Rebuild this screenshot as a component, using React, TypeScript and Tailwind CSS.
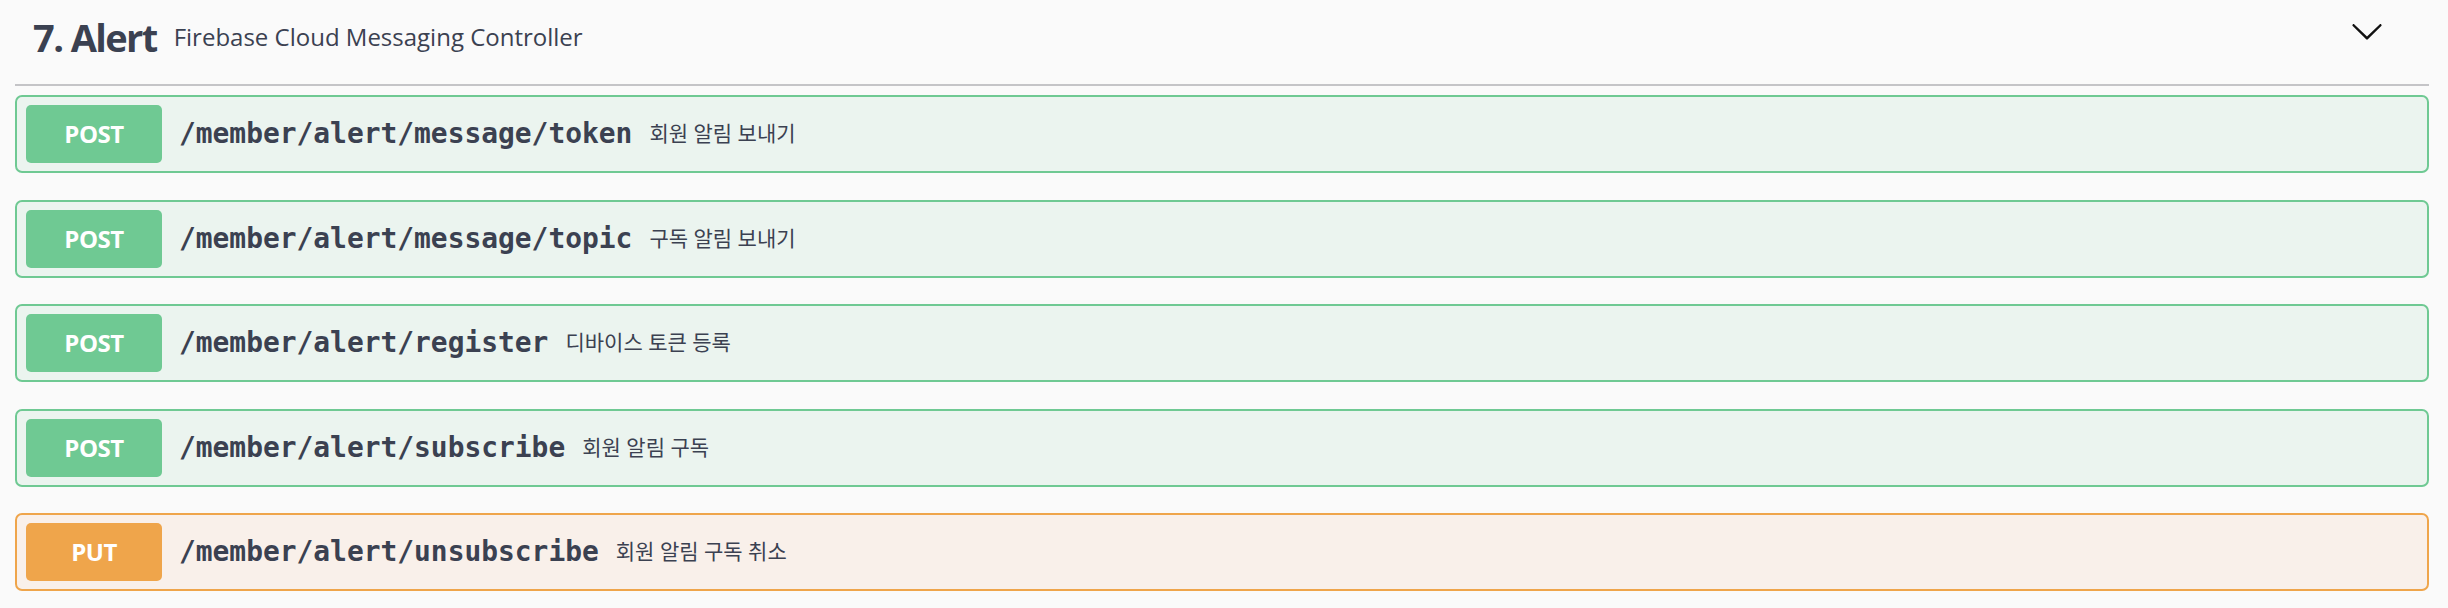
import React from "react"

type Op = {
  method: "POST" | "PUT"
  path: string
  summary: string
}

const ops: Op[] = [
  { method: "POST", path: "/member/alert/message/token", summary: "회원 알림 보내기" },
  { method: "POST", path: "/member/alert/message/topic", summary: "구독 알림 보내기" },
  { method: "POST", path: "/member/alert/register", summary: "디바이스 토큰 등록" },
  { method: "POST", path: "/member/alert/subscribe", summary: "회원 알림 구독" },
  { method: "PUT", path: "/member/alert/unsubscribe", summary: "회원 알림 구독 취소" },
]

const styles = {
  POST: {
    box: "border-[#6fc993] bg-[#ebf4ef]",
    badge: "bg-[#6fc993]",
  },
  PUT: {
    box: "border-[#efa54b] bg-[#f9f0ea]",
    badge: "bg-[#efa54b]",
  },
}

function OpBlock({ op }: { op: Op }) {
  const s = styles[op.method]
  return (
    <div className={`flex items-center h-[78px] px-[9px] border-2 rounded-[7px] ${s.box}`}>
      <span
        className={`flex items-center justify-center w-[136px] h-[58px] rounded-[5px] text-white font-bold text-[24px] tracking-[-0.5px] ${s.badge}`}
        style={{ fontFamily: '"Open Sans", sans-serif' }}
      >
        {op.method}
      </span>
      <span
        className="pl-[17px] pr-[17px] text-[27.9px] font-bold text-[#3b4151]"
        style={{ fontFamily: '"DejaVu Sans Mono", monospace' }}
      >
        {op.path}
      </span>
      <span
        className="text-[21px] text-[#3b4151]"
        style={{ fontFamily: '"Noto Sans", "Noto Sans CJK KR", sans-serif' }}
      >
        {op.summary}
      </span>
    </div>
  )
}

export default function App() {
  return (
    <div className="w-[2448px] h-[608px] bg-[#fafafa] overflow-hidden">
      <div className="ml-[15px] mr-[19px]">
        {/* Tag header */}
        <div className="flex items-center h-[86px] pb-[10px] border-b-2 border-[#c4c4c7]">
          <h3
            className="flex items-center flex-1 pl-[18px] text-[#3b4151]"
            style={{ fontFamily: '"Open Sans", sans-serif' }}
          >
            <span className="text-[38px] font-bold tracking-[-1.6px]">7. Alert</span>
            <span className="ml-[17px] text-[24px]">Firebase Cloud Messaging Controller</span>
          </h3>
          <svg
            className="self-start mt-[14px] mr-[45px]"
            width="34"
            height="34"
            viewBox="0 0 20 20"
            aria-hidden="true"
          >
            <path
              fill="#111"
              d="M17.418 6.109c.272-.268.709-.268.979 0s.271.701 0 .969l-7.908 7.83c-.27.268-.707.268-.979 0l-7.908-7.83c-.27-.268-.27-.701 0-.969.271-.268.709-.268.979 0L10 13.25l7.418-7.141z"
            />
          </svg>
        </div>

        {/* Operations */}
        <div className="flex flex-col gap-[26.5px] mt-[9px]">
          {ops.map((op) => (
            <OpBlock key={op.path} op={op} />
          ))}
        </div>
      </div>
    </div>
  )
}
